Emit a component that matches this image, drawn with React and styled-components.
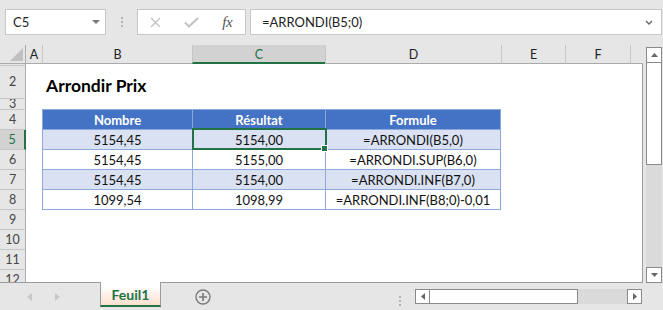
import React from 'react';
import styled, { createGlobalStyle, css } from 'styled-components';

const GREEN = '#217346';
const FONT = 'Lato, "Liberation Sans", sans-serif';

const GlobalStyle = createGlobalStyle`
  html, body { margin: 0; padding: 0; }
  body { background: #e6e6e6; font-family: ${FONT}; }
`;

const Window = styled.div`
  width: 663px;
  height: 310px;
  background: #e6e6e6;
  display: flex;
  flex-direction: column;
  overflow: hidden;
  color: #222;
`;

/* ---------- formula bar ---------- */
const FormulaBar = styled.div`
  height: 44px;
  flex: none;
  box-sizing: border-box;
  padding: 9px 1px 0 5px;
  display: flex;
  align-items: flex-start;
`;

const Field = styled.div`
  height: 26px;
  box-sizing: border-box;
  border: 1px solid #c6c6c6;
  background: #fff;
  display: flex;
  align-items: center;
  flex: none;
`;

const NameBox = styled(Field)`
  width: 101px;
  padding: 0 5px 0 7px;
  justify-content: space-between;
  font-size: 13px;
`;

const Grip = styled.svg`
  flex: none;
  margin: 8px ${(p) => p.$right}px 0 ${(p) => p.$left}px;
`;

const FxButtons = styled(Field)`
  width: 109px;
`;

const FxSlot = styled.div`
  width: 36px;
  display: flex;
  justify-content: center;
  align-items: center;
`;

const FxLabel = styled.span`
  font-family: "Liberation Serif", serif;
  font-style: italic;
  font-size: 15px;
  color: #555;
  letter-spacing: -0.5px;
`;

const FormulaInput = styled(Field)`
  flex: 1;
  margin-left: 4px;
  padding: 0 8px 0 11px;
  justify-content: space-between;
  font-size: 13px;
`;

/* ---------- sheet ---------- */
const SheetArea = styled.div`
  display: flex;
  height: 239px;
  flex: none;
`;

const Grid = styled.div`
  width: 643px;
  flex: none;
  display: flex;
  flex-direction: column;
`;

const HeaderRow = styled.div`
  display: flex;
  height: 20px;
  flex: none;
  align-items: flex-end;
`;

const Corner = styled.div`
  width: 26px;
  height: 19px;
  flex: none;
  box-sizing: border-box;
  border-right: 1px solid #ababab;
  border-bottom: 1px solid #ababab;
  display: flex;
  align-items: flex-end;
  justify-content: flex-end;
  padding: 0 2px 2px 0;
`;

const ColHead = styled.div`
  width: ${(p) => p.$w}px;
  height: 19px;
  flex: ${(p) => (p.$grow ? 1 : 'none')};
  box-sizing: border-box;
  border-left: ${(p) => (p.$first ? 'none' : '1px solid #c6c6c6')};
  border-bottom: 1px solid #ababab;
  display: flex;
  align-items: center;
  justify-content: center;
  font-size: 12.5px;
  color: #222;
  ${(p) =>
    p.$sel &&
    css`
      background: #d2d2d2;
      color: ${GREEN};
      border-bottom: 2px solid ${GREEN};
      padding-top: 1px;
    `}
`;

const Body = styled.div`
  flex: 1;
  background: #fff;
  overflow: hidden;
  box-sizing: border-box;
  border-right: 1px solid #9b9b9b;
  border-bottom: 1px solid #9b9b9b;
  display: flex;
  flex-direction: column;
`;

const Row = styled.div`
  display: flex;
  height: ${(p) => p.$h}px;
  flex: none;
`;

const RowHead = styled.div`
  width: 26px;
  flex: none;
  box-sizing: border-box;
  background: ${(p) => (p.$sel ? '#d2d2d2' : '#e6e6e6')};
  border-right: ${(p) => (p.$sel ? `2px solid ${GREEN}` : '1px solid #ababab')};
  border-bottom: 1px solid #c6c6c6;
  color: ${(p) => (p.$sel ? GREEN : '#444')};
  font-size: 12.5px;
  display: flex;
  align-items: ${(p) => (p.$top ? 'flex-start' : 'center')};
  justify-content: center;
  overflow: hidden;
  line-height: 16px;
`;

const Cell = styled.div`
  width: ${(p) => p.$w}px;
  flex: ${(p) => (p.$grow ? 1 : 'none')};
  box-sizing: border-box;
  display: flex;
  align-items: center;
  justify-content: center;
  white-space: nowrap;
  font-size: 13px;
  color: #111;
`;

const TitleCell = styled(Cell)`
  justify-content: flex-start;
  align-items: flex-end;
  padding: 0 0 3px 4px;
  overflow: visible;
  font-size: 17.5px;
  font-weight: 700;
  line-height: 20px;
  color: #000;
`;

const TableCell = styled(Cell)`
  border-left: 1px solid #8ea9db;
  border-bottom: 1px solid #8ea9db;
  border-right: ${(p) => (p.$last ? '1px solid #8ea9db' : 'none')};
  background: ${(p) => (p.$band ? '#d9e1f2' : '#fff')};
  ${(p) =>
    p.$head &&
    css`
      background: #4472c4;
      color: #fff;
      font-weight: 700;
      box-shadow: 0 -1px 0 #8ea9db;
    `}
  ${(p) =>
    p.$active &&
    css`
      position: relative;
      &::after {
        content: '';
        position: absolute;
        left: -1px;
        right: -2px;
        top: -2px;
        bottom: -1px;
        border: 2px solid ${GREEN};
      }
      &::before {
        content: '';
        position: absolute;
        right: -3px;
        bottom: -3px;
        width: 5px;
        height: 5px;
        background: ${GREEN};
        border: 1px solid #fff;
        z-index: 2;
      }
    `}
`;

/* ---------- vertical scrollbar ---------- */
const VScrollArea = styled.div`
  flex: 1;
  padding: 3px 0 0 3px;
  box-sizing: border-box;
`;

const VScroll = styled.div`
  width: 16px;
  height: 236px;
  display: flex;
  flex-direction: column;
  background: #dadada;
`;

const ScrollBtn = styled.div`
  width: ${(p) => (p.$h ? '15px' : '16px')};
  height: ${(p) => (p.$h ? '15px' : '16px')};
  flex: none;
  box-sizing: border-box;
  border: 1px solid #8a8a8a;
  background: #fff;
  display: flex;
  align-items: center;
  justify-content: center;
`;

const VThumb = styled.div`
  height: 102px;
  flex: none;
  box-sizing: border-box;
  border: 1px solid #8a8a8a;
  border-top: none;
  background: #fff;
`;

const Spacer = styled.div`
  flex: 1;
`;

/* ---------- tab bar ---------- */
const TabBar = styled.div`
  flex: 1;
  display: flex;
  align-items: center;
  padding-right: 21px;
`;

const NavArrows = styled.div`
  width: 100px;
  flex: none;
  box-sizing: border-box;
  display: flex;
  align-items: center;
  padding-left: 27px;
  gap: 23px;
`;

const SheetTab = styled.div`
  position: relative;
  align-self: flex-start;
  margin-top: -1px;
  width: 61px;
  height: 25px;
  flex: none;
  box-sizing: border-box;
  border-left: 1px solid #9b9b9b;
  border-right: 1px solid #9b9b9b;
  border-bottom: 2px solid ${GREEN};
  background: linear-gradient(#ffffff 20%, #fbe0cd);
  display: flex;
  align-items: center;
  justify-content: center;
  padding-top: 2px;
  font-weight: 700;
  font-size: 14px;
  color: ${GREEN};
`;

const AddSheet = styled.svg`
  flex: none;
  margin-left: 34px;
`;

const HScroll = styled.div`
  width: 227px;
  height: 15px;
  flex: none;
  display: flex;
  background: #dadada;
`;

const HThumb = styled.div`
  width: 148px;
  flex: none;
  box-sizing: border-box;
  border: 1px solid #8a8a8a;
  border-left: none;
  background: #fff;
`;

const COLS = [
  { key: 'A', w: 16 },
  { key: 'B', w: 150 },
  { key: 'C', w: 133 },
  { key: 'D', w: 176 },
  { key: 'E', w: 64 },
  { key: 'F', w: 65 },
  { key: 'G', w: 12, grow: true },
];

const DATA = [
  ['5154,45', '5154,00', '=ARRONDI(B5,0)'],
  ['5154,45', '5155,00', '=ARRONDI.SUP(B6,0)'],
  ['5154,45', '5154,00', '=ARRONDI.INF(B7,0)'],
  ['1099,54', '1098,99', '=ARRONDI.INF(B8;0)-0,01'],
];

const Tri = ({ dir, color = '#666', w = 7, h = 4 }) => {
  const paths = {
    down: `M0 0H${w}L${w / 2} ${h}Z`,
    up: `M0 ${h}H${w}L${w / 2} 0Z`,
    left: `M${w} 0V${h}L0 ${h / 2}Z`,
    right: `M0 0V${h}L${w} ${h / 2}Z`,
  };
  return (
    <svg width={w} height={h} viewBox={`0 0 ${w} ${h}`}>
      <path d={paths[dir]} fill={color} />
    </svg>
  );
};

const Dots = ({ left, right }) => (
  <Grip $left={left} $right={right} width="2" height="10" viewBox="0 0 2 10">
    <rect x="0" y="0" width="2" height="2" fill="#b5b5b5" />
    <rect x="0" y="4" width="2" height="2" fill="#b5b5b5" />
    <rect x="0" y="8" width="2" height="2" fill="#b5b5b5" />
  </Grip>
);

function BlankCells() {
  return COLS.map((c) => <Cell key={c.key} $w={c.w} $grow={c.grow} />);
}

export default function App() {
  const rows = [];
  rows.push(
    <Row key={1} $h={2}>
      <RowHead $top>1</RowHead>
      <BlankCells />
    </Row>
  );
  rows.push(
    <Row key={2} $h={33}>
      <RowHead>2</RowHead>
      <Cell $w={16} />
      <TitleCell $w={150}>Arrondir Prix</TitleCell>
      {COLS.slice(2).map((c) => (
        <Cell key={c.key} $w={c.w} $grow={c.grow} />
      ))}
    </Row>
  );
  rows.push(
    <Row key={3} $h={11}>
      <RowHead>3</RowHead>
      <BlankCells />
    </Row>
  );
  rows.push(
    <Row key={4} $h={20}>
      <RowHead>4</RowHead>
      <Cell $w={16} />
      <TableCell $w={150} $head>Nombre</TableCell>
      <TableCell $w={133} $head>Résultat</TableCell>
      <TableCell $w={176} $head $last>Formule</TableCell>
      {COLS.slice(4).map((c) => (
        <Cell key={c.key} $w={c.w} $grow={c.grow} />
      ))}
    </Row>
  );
  DATA.forEach((d, i) => {
    const n = 5 + i;
    const band = i % 2 === 0;
    rows.push(
      <Row key={n} $h={20}>
        <RowHead $sel={n === 5}>{n}</RowHead>
        <Cell $w={16} />
        <TableCell $w={150} $band={band}>{d[0]}</TableCell>
        <TableCell $w={133} $band={band} $active={n === 5}>{d[1]}</TableCell>
        <TableCell $w={176} $band={band} $last>{d[2]}</TableCell>
        {COLS.slice(4).map((c) => (
          <Cell key={c.key} $w={c.w} $grow={c.grow} />
        ))}
      </Row>
    );
  });
  [9, 10, 11, 12].forEach((n) =>
    rows.push(
      <Row key={n} $h={20}>
        <RowHead>{n}</RowHead>
        <BlankCells />
      </Row>
    )
  );

  return (
    <Window>
      <GlobalStyle />
      <FormulaBar>
        <NameBox>
          <span>C5</span>
          <Tri dir="down" color="#777" w={8} h={4} />
        </NameBox>
        <Dots left={15} right={14} />
        <FxButtons>
          <FxSlot>
            <svg width="11" height="11" viewBox="0 0 11 11">
              <path d="M1 1L10 10M10 1L1 10" stroke="#c2c2c2" strokeWidth="1.3" fill="none" />
            </svg>
          </FxSlot>
          <FxSlot>
            <svg width="15" height="11" viewBox="0 0 15 11">
              <path d="M1 5.5L5 9.5L14 1" stroke="#c2c2c2" strokeWidth="2" fill="none" />
            </svg>
          </FxSlot>
          <FxSlot>
            <FxLabel>fx</FxLabel>
          </FxSlot>
        </FxButtons>
        <FormulaInput>
          <span>=ARRONDI(B5;0)</span>
          <svg width="8" height="5" viewBox="0 0 8 5">
            <path d="M1 1L4 4L7 1" stroke="#666" strokeWidth="1.4" fill="none" />
          </svg>
        </FormulaInput>
      </FormulaBar>

      <SheetArea>
        <Grid>
          <HeaderRow>
            <Corner>
              <svg width="13" height="13" viewBox="0 0 13 13">
                <path d="M0 13H13V0Z" fill="#c0c0c0" />
              </svg>
            </Corner>
            {COLS.map((c, i) => (
              <ColHead key={c.key} $w={c.w} $grow={c.grow} $first={i === 0} $sel={c.key === 'C'}>
                {c.key === 'G' ? '' : c.key}
              </ColHead>
            ))}
          </HeaderRow>
          <Body>{rows}</Body>
        </Grid>
        <VScrollArea>
          <VScroll>
            <ScrollBtn>
              <Tri dir="up" />
            </ScrollBtn>
            <VThumb />
            <Spacer />
            <ScrollBtn>
              <Tri dir="down" />
            </ScrollBtn>
          </VScroll>
        </VScrollArea>
      </SheetArea>

      <TabBar>
        <NavArrows>
          <Tri dir="left" color="#c8c8c8" w={5} h={8} />
          <Tri dir="right" color="#c8c8c8" w={5} h={8} />
        </NavArrows>
        <SheetTab>Feuil1</SheetTab>
        <AddSheet width="16" height="16" viewBox="0 0 16 16">
          <circle cx="8" cy="8" r="7" stroke="#7a7a7a" strokeWidth="1.4" fill="none" />
          <path d="M8 4V12M4 8H12" stroke="#7a7a7a" strokeWidth="1.6" />
        </AddSheet>
        <Spacer />
        <Dots left={0} right={14} />
        <HScroll>
          <ScrollBtn $h>
            <Tri dir="left" w={4} h={7} />
          </ScrollBtn>
          <HThumb />
          <Spacer />
          <ScrollBtn $h>
            <Tri dir="right" w={4} h={7} />
          </ScrollBtn>
        </HScroll>
      </TabBar>
    </Window>
  );
}
